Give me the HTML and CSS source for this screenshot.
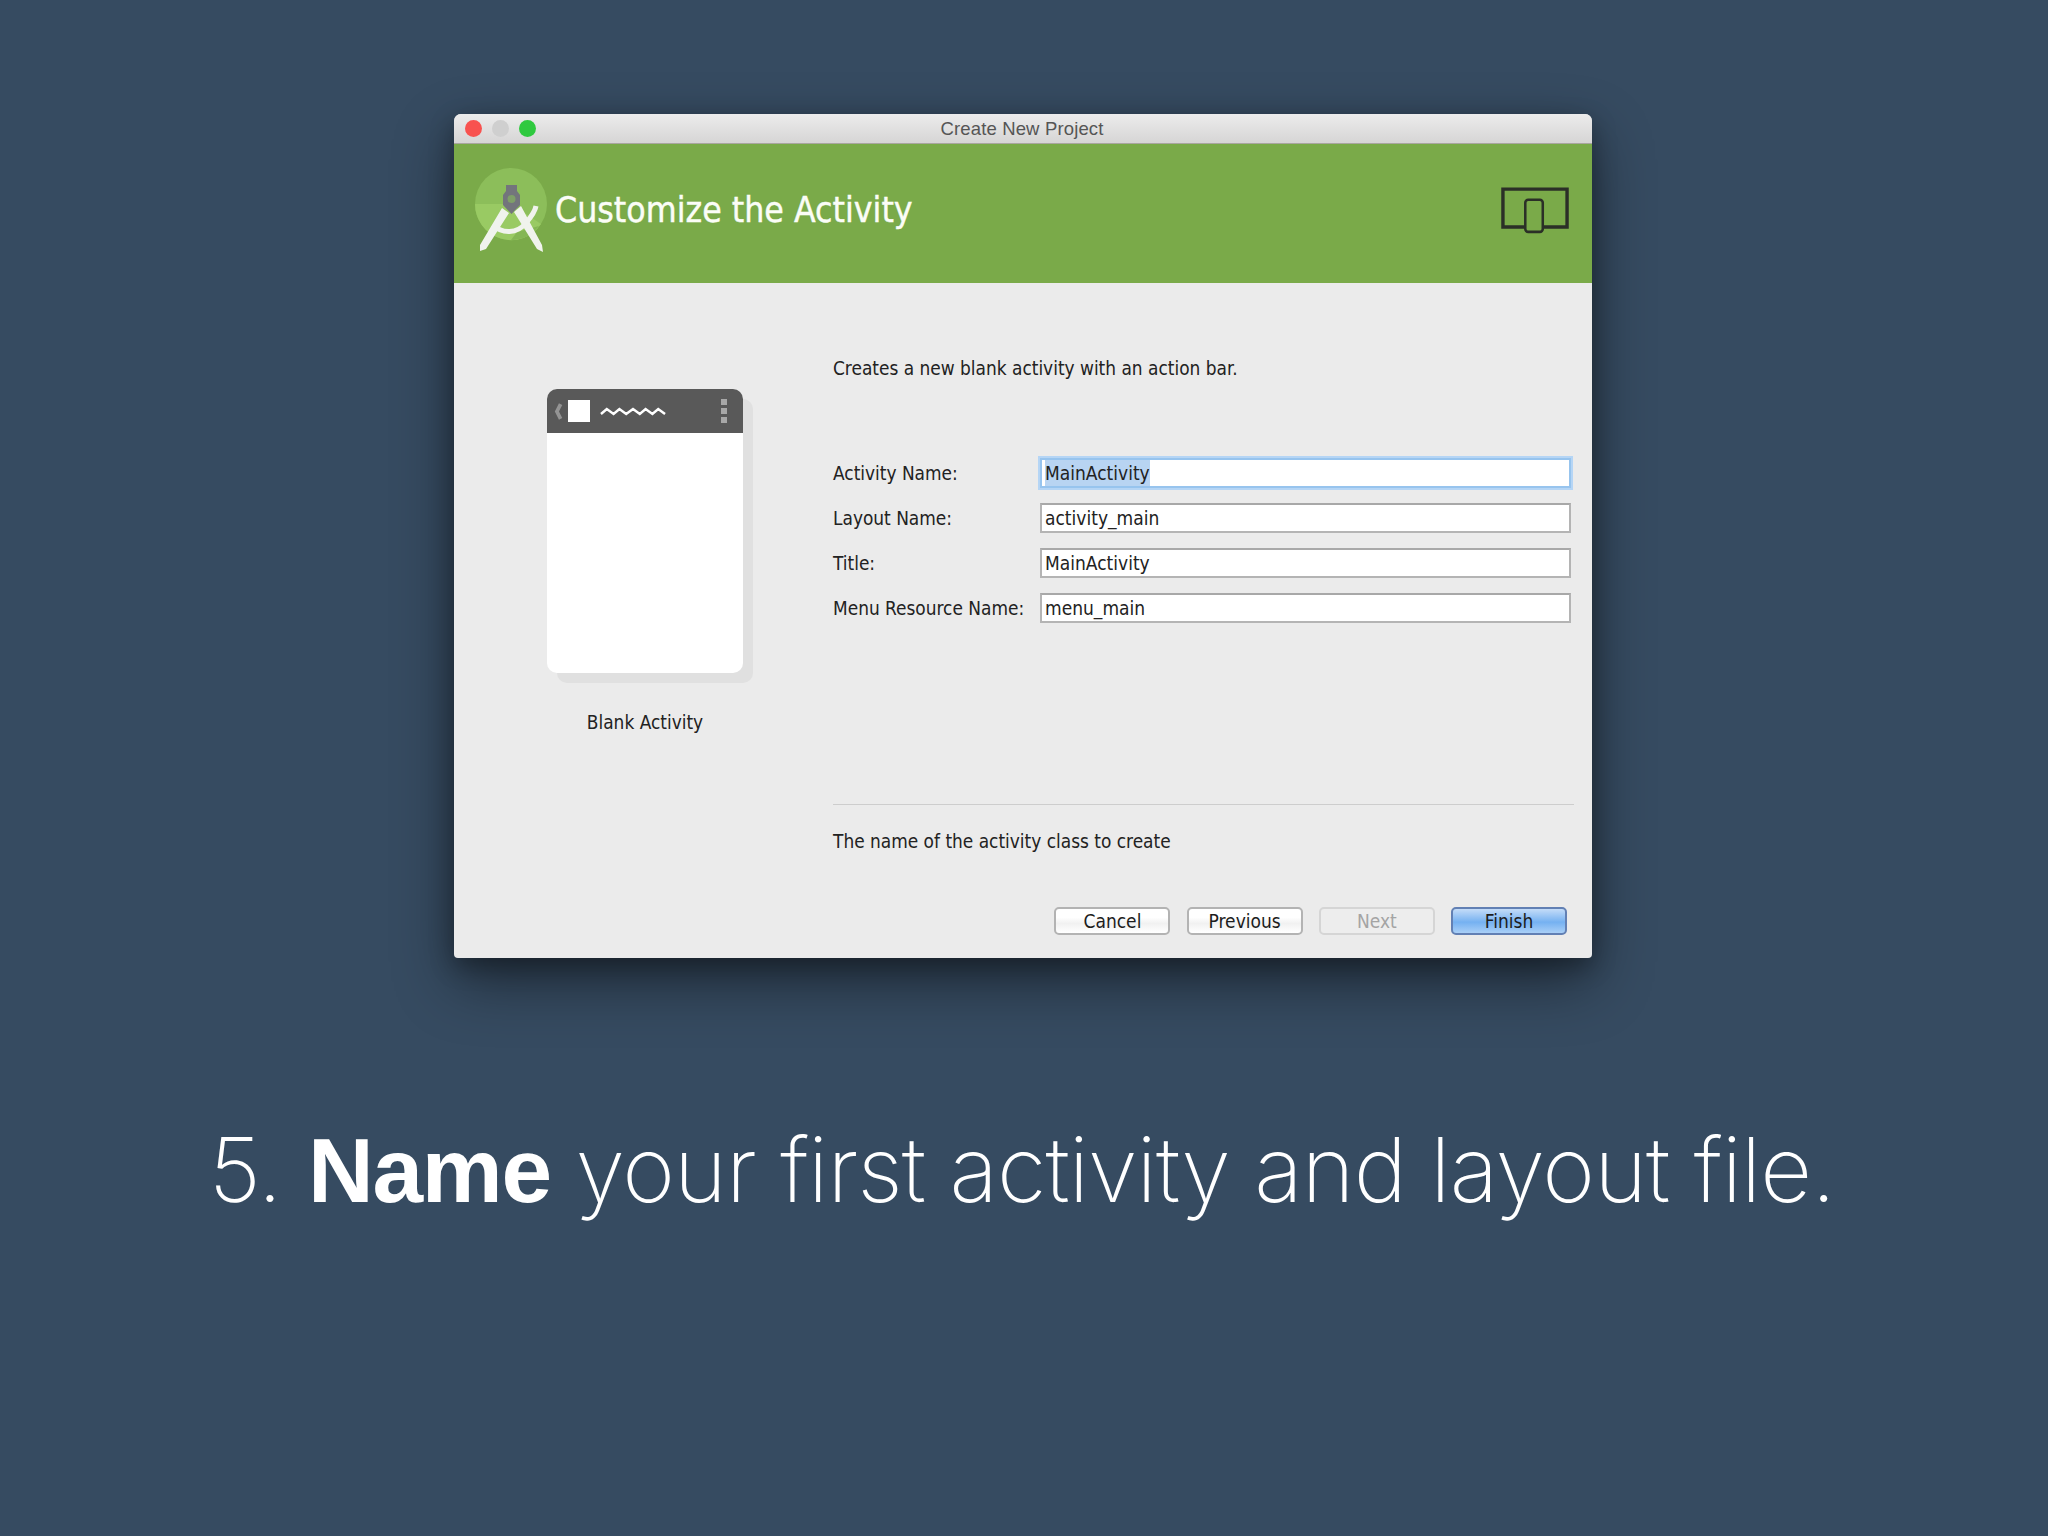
FILE: index.html
```html
<!DOCTYPE html>
<html lang="en">
<head>
<meta charset="utf-8">
<title>Name your first activity</title>
<link rel="stylesheet" href="styles.css">
</head>
<body>
<main class="slide">
  <section class="window">
    <header class="titlebar">
      <span class="light red"></span><span class="light grey"></span><span class="light green"></span>
      <span class="win-title">Create New Project</span>
    </header>
    <div class="banner">
      <svg class="logo" viewBox="0 0 80 90" aria-hidden="true">
        <circle cx="41" cy="39" r="36" fill="#8cbe5a"/>
        <path d="M5 39a36 36 0 0 0 66 20L41 39z" fill="#99ca63"/>
        <path d="M47 67 41 75a36 36 0 0 0 28-14z" fill="#84b654"/>
        <path d="M36 20h11v6l3 4v10l-8.500 9-8.500-9V30l3-4z" fill="#73757c"/>
        <circle cx="41.500" cy="34" r="4" fill="#7f9f68"/>
        <path d="M32 43l7 5-23 36-6 2 0-6zM51 41 44 47l23 37 6 3-1-7z" fill="#f0f3ed"/>
        <path d="M23 60c9 9 24 9 33-2 5-6 9-11 10-17" fill="none" stroke="#f0f3ed" stroke-width="5"/>
      </svg>
      <h1 class="banner-title">Customize the Activity</h1>
      <svg class="device" viewBox="0 0 70 48" aria-hidden="true">
        <path d="M25 41H2V2h66v39H44" fill="none" stroke="#2b2f27" stroke-width="3.500"/>
        <rect x="25" y="13" width="18" height="33" rx="3" fill="none" stroke="#2b2f27" stroke-width="2.600"/>
      </svg>
    </div>
    <div class="body">
      <aside class="preview">
        <div class="phone">
          <div class="actionbar">
            <svg class="chev" viewBox="0 0 8 16" aria-hidden="true"><path d="M6 1 2.500 8 6 15" fill="none" stroke="#949494" stroke-width="3.500"/></svg>
            <span class="app-icon"></span>
            <svg class="squiggle" viewBox="0 0 68 10" aria-hidden="true"><path d="M1 8l6-5 7 5 6-5 7 5 7-5 7 5 6-5 7 5 6-5 7 5" fill="none" stroke="#fff" stroke-width="2.600"/></svg>
            <span class="overflow"><i></i><i></i><i></i></span>
          </div>
        </div>
        <p class="preview-name">Blank Activity</p>
      </aside>
      <div class="form">
        <p class="lede">Creates a new blank activity with an action bar.</p>
        <div class="fields">
          <div class="field"><label>Activity Name:</label><div class="input focus"><span class="sel">MainActivity</span></div></div>
          <div class="field"><label>Layout Name:</label><div class="input">activity_main</div></div>
          <div class="field"><label>Title:</label><div class="input">MainActivity</div></div>
          <div class="field"><label>Menu Resource Name:</label><div class="input">menu_main</div></div>
        </div>
        <p class="help">The name of the activity class to create</p>
        <div class="buttons">
          <span class="btn">Cancel</span>
          <span class="btn">Previous</span>
          <span class="btn off">Next</span>
          <span class="btn primary">Finish</span>
        </div>
      </div>
    </div>
  </section>
  <p class="caption">5. <b>Name</b> your first activity and layout file.</p>
</main>
</body>
</html>
```
FILE: styles.css
```css
* { box-sizing: border-box; }
html, body { margin: 0; height: 100%; }
body { background: #364b61; overflow: hidden; }
.slide { width: 2048px; height: 1536px; padding-top: 114px; }

.window {
  width: 1138px; height: 844px; margin-left: 454px;
  background: #ebebeb; border-radius: 7px 7px 4px 4px;
  box-shadow: 0 24px 60px rgba(0,0,0,.45), 0 8px 24px rgba(0,0,0,.3);
  display: flex; flex-direction: column;
  font-family: "DejaVu Sans Condensed", "DejaVu Sans", sans-serif;
  font-stretch: condensed; color: #222;
}
.titlebar {
  height: 30px; flex: none; display: flex; align-items: center; gap: 10px; padding-left: 11px; position: relative;
  background: linear-gradient(#ececec, #d6d5d5);
  border-bottom: 1px solid #a9a69f; border-radius: 7px 7px 0 0;
}
.light { width: 17px; height: 17px; border-radius: 50%; }
.red { background: #f8524f; } .grey { background: #cfcfcf; } .green { background: #2fc93f; }
.win-title {
  position: absolute; left: 0; right: 2px; text-align: center;
  font: 18.500px "Liberation Sans", sans-serif; color: #555; letter-spacing: .15px;
}

.banner {
  height: 139px; flex: none; background: #7aaa49; display: flex; align-items: flex-start; position: relative;
}
.logo { position: absolute; left: 16px; top: 21px; width: 80px; height: 90px; }
.banner-title {
  margin: 46px 0 0 101px; font-size: 35.300px; font-weight: 400; color: #fbfdf7; line-height: 40px; white-space: nowrap;
  -webkit-text-stroke: .4px #fbfdf7;
}
.device { width: 68px; height: 47px; margin: 43px 23px 0 auto; }

.body { flex: 1; display: flex; }
.preview { width: 379px; flex: none; padding: 106px 0 0 93px; }
.phone { width: 196px; height: 284px; background: #fff; border-radius: 10px; box-shadow: 10px 10px 0 #e0e0e0; overflow: hidden; }
.actionbar { height: 44px; background: #595959; display: flex; align-items: center; padding: 0 16px 0 7px; }
.chev { width: 9px; height: 17px; }
.app-icon { width: 22px; height: 22px; background: #fff; margin-left: 5px; }
.squiggle { width: 66px; height: 10px; margin-left: 10px; }
.overflow { margin-left: auto; display: flex; flex-direction: column; gap: 3px; }
.overflow i { display: block; width: 6px; height: 6px; background: #a8a8a8; }
.preview-name { width: 196px; margin: 37px 0 0; text-align: center; font-size: 18.900px; line-height: 24px; }

.form { flex: 1; padding-right: 18px; }
.lede { margin: 73px 0 0; font-size: 18.900px; line-height: 24px; }
.fields { margin-top: 78px; display: flex; flex-direction: column; gap: 15px; padding-right: 3px; }
.field { display: flex; align-items: center; height: 30px; font-size: 18.900px; }
.field label { width: 207px; flex: none; }
.input {
  flex: 1; height: 30px; background: #fff; border: 2px solid #b4b4b4; border-top-color: #a8a8a8;
  padding-left: 3px; line-height: 26px; font-size: 19px;
}
.input.focus { border-color: #97c4ee; box-shadow: 0 0 0 2px #b5d5f5; }
.sel { background: #b8d4f2; display: inline-block; }
.help {
  margin: 181px 0 0; padding-top: 24px; border-top: 1px solid #cdcdcd; font-size: 18.900px; line-height: 24px;
}
.buttons { margin-top: 54px; display: flex; justify-content: flex-end; gap: 16.200px; padding-right: 7px; }
.btn {
  width: 116px; height: 28px; border-radius: 5px; border: 2px solid #b3b3b3;
  background: linear-gradient(#fff 35%, #f1f1f1 60%, #fff);
  text-align: center; font-size: 19px; line-height: 24px; color: #1c1c1c;
}
.btn.off { color: #a4a4a4; border-color: #d5d5d5; background: #ededed; }
.btn.primary { border-color: #6280b4; background: linear-gradient(#c4dcf8, #75b1f1 55%, #a9cff7); }

.caption {
  margin: 157px 0 0; text-align: center; color: #fff;
  font: 250 90px/110px Inter, sans-serif; letter-spacing: -.900px; padding-right: 4px; white-space: nowrap;
}
.caption b { font: 700 91px/110px "Liberation Sans", sans-serif; letter-spacing: -1.200px; margin-left: 2px; }
```
